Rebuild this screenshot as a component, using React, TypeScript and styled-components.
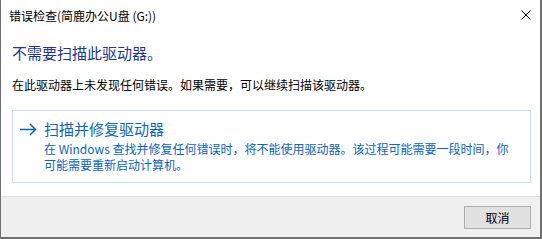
import React from 'react';
import styled, { createGlobalStyle } from 'styled-components';

const GlobalStyle = createGlobalStyle`
  html, body {
    margin: 0;
    padding: 0;
    background: #3a3a3a;
    overflow: hidden;
  }
  body {
    font-family: "Noto Sans CJK SC", "Noto Sans", sans-serif;
  }
`;

const Window = styled.div`
  box-sizing: border-box;
  display: flex;
  flex-direction: column;
  width: 542px;
  height: 239px;
  background: #fff;
  border-left: 1px solid #707070;
  border-right: 2px solid #707070;
  border-bottom: 2px solid #707070;
`;

const TitleBar = styled.div`
  display: flex;
  align-items: center;
  height: 31px;
  padding: 0 9px 0 8px;
  font-size: 12px;
  color: #000;
`;

const TitleText = styled.div`
  flex: 1;
  line-height: 16px;
`;

const CloseButton = styled.div`
  display: flex;
  width: 10px;
  height: 10px;
  margin-top: -1px;
`;

const Content = styled.div`
  flex: 1;
  display: flex;
  flex-direction: column;
  padding: 12px 9px 10px 11px;
`;

const Instruction = styled.div`
  font-size: 15px;
  line-height: 20px;
  color: #1a3799;
`;

const Message = styled.div`
  margin-top: 14px;
  font-size: 12px;
  line-height: 16px;
  color: #000;
`;

const CommandLink = styled.div`
  display: flex;
  align-items: flex-start;
  margin-top: 17px;
  padding: 8px 0 9px 6px;
  border: 1px solid #c7e0f4;
  color: #0a64c8;
`;

const ArrowBox = styled.div`
  display: flex;
  align-items: center;
  height: 20px;
  width: 25px;
  flex-shrink: 0;
`;

const LinkBody = styled.div`
  display: flex;
  flex-direction: column;
`;

const LinkTitle = styled.div`
  font-size: 15px;
  line-height: 20px;
`;

const LinkNote = styled.div`
  margin-top: 2px;
  font-size: 12px;
  line-height: 16px;
`;

const Footer = styled.div`
  display: flex;
  justify-content: flex-end;
  height: 41px;
  padding: 9px 9px 0 0;
  box-sizing: border-box;
  background: #f0f0f0;
  border-top: 1px solid #dfdfdf;
`;

const Button = styled.button`
  box-sizing: border-box;
  width: 67px;
  height: 23px;
  padding: 0;
  background: #e1e1e1;
  border: 1px solid #adadad;
  font-family: "Noto Sans CJK SC", "Noto Sans", sans-serif;
  font-size: 12px;
  color: #000;
`;

const CloseIcon = () => (
  <svg width="10" height="10" viewBox="0 0 10 10">
    <path d="M0.5 0.5 L9.5 9.5 M9.5 0.5 L0.5 9.5" stroke="#000" strokeWidth="1" fill="none" />
  </svg>
);

const ArrowIcon = () => (
  <svg width="18" height="13" viewBox="0 0 18 13">
    <path d="M1 6.5 H16.5 M11 1 L16.5 6.5 L11 12" stroke="#0a64c8" strokeWidth="1.5" fill="none" />
  </svg>
);

export default function App() {
  return (
    <>
      <GlobalStyle />
      <Window>
        <TitleBar>
          <TitleText>错误检查(简鹿办公U盘 (G:))</TitleText>
          <CloseButton>
            <CloseIcon />
          </CloseButton>
        </TitleBar>
        <Content>
          <Instruction>不需要扫描此驱动器。</Instruction>
          <Message>在此驱动器上未发现任何错误。如果需要，可以继续扫描该驱动器。</Message>
          <CommandLink>
            <ArrowBox>
              <ArrowIcon />
            </ArrowBox>
            <LinkBody>
              <LinkTitle>扫描并修复驱动器</LinkTitle>
              <LinkNote>
                在 Windows 查找并修复任何错误时，将不能使用驱动器。该过程可能需要一段时间，你
                <br />
                可能需要重新启动计算机。
              </LinkNote>
            </LinkBody>
          </CommandLink>
        </Content>
        <Footer>
          <Button>取消</Button>
        </Footer>
      </Window>
    </>
  );
}
